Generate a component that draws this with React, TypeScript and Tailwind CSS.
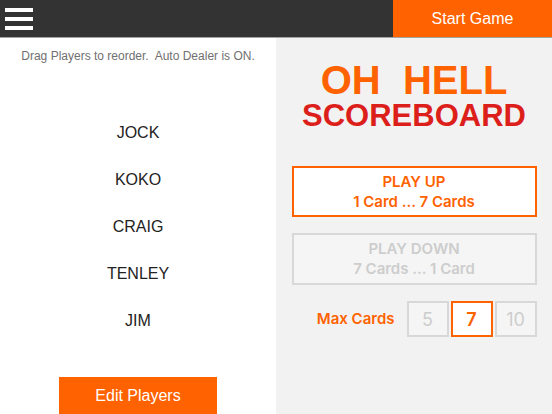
import { useState } from "react"

const players = ["JOCK", "KOKO", "CRAIG", "TENLEY", "JIM"]
const maxOptions = [5, 7, 10]

const HamburgerIcon = () => (
  <div className="flex flex-col gap-[5px] pl-[5px]">
    <span className="block h-[4px] w-[28px] bg-white" />
    <span className="block h-[4px] w-[28px] bg-white" />
    <span className="block h-[4px] w-[28px] bg-white" />
  </div>
)

const ModeButton = ({ title, range, active }: { title: string; range: string; active: boolean }) => (
  <button
    className={
      active
        ? "flex h-[51px] w-[245px] flex-col items-center justify-center border-2 border-[#ff6200] bg-white text-[#ff6200]"
        : "flex h-[52px] w-[245px] flex-col items-center justify-center border-2 border-[#d8d8d8] bg-[#f5f5f5] text-[#cdcdcd]"
    }
  >
    <span className="text-[15px] font-semibold leading-[20px]">{title}</span>
    <span className="text-[15px] font-semibold leading-[20px]">{range}</span>
  </button>
)

export default function App() {
  const [maxCards, setMaxCards] = useState(7)

  return (
    <div className="flex h-[414px] w-[552px] flex-col overflow-hidden font-['Liberation_Sans',Arial,sans-serif]">
      <header className="flex h-[38px] shrink-0 items-stretch border-b border-[#a3a3a3] bg-[#333333]">
        <div className="flex flex-1 items-center">
          <HamburgerIcon />
        </div>
        <button className="flex w-[159px] items-center justify-center bg-[#ff6200] text-[16px] text-white">
          Start Game
        </button>
      </header>

      <div className="flex min-h-0 flex-1">
        <section className="flex w-[276px] flex-col items-center bg-white">
          <p className="mt-[10px] whitespace-pre text-[12px] leading-[16px] text-[#707070]">
            Drag Players to reorder.  Auto Dealer is ON.
          </p>
          <ul className="mt-[45px] flex flex-col items-center">
            {players.map((name) => (
              <li key={name} className="text-[16px] leading-[47px] text-[#222222]">
                {name}
              </li>
            ))}
          </ul>
          <button className="mt-[33px] h-[37px] w-[158px] bg-[#ff6200] text-[16px] text-white">
            Edit Players
          </button>
        </section>

        <section className="flex flex-1 flex-col items-center bg-[#f2f2f2]">
          <h1 className="mt-[22px] whitespace-pre text-[40px] font-bold leading-[40px] text-[#ff6200]">
            OH  HELL
          </h1>
          <h2 className="text-[31px] font-bold leading-[31px] text-[#dc1f1b]">SCOREBOARD</h2>

          <div className="mt-[35px] flex flex-col gap-[16px] font-['Inter',sans-serif]">
            <ModeButton title="PLAY UP" range="1 Card ... 7 Cards" active />
            <ModeButton title="PLAY DOWN" range="7 Cards ... 1 Card" active={false} />
          </div>

          <div className="mt-[16px] flex w-[245px] items-center justify-end font-['Inter',sans-serif]">
            <span className="mr-[12px] text-[15px] font-semibold text-[#ff6200]">Max Cards</span>
            <div className="flex gap-[2px]">
              {maxOptions.map((n) => (
                <button
                  key={n}
                  onClick={() => setMaxCards(n)}
                  className={
                    n === maxCards
                      ? "flex h-[36px] w-[42px] items-center justify-center border-2 border-[#ff6200] bg-white text-[18px] font-semibold text-[#ff6200]"
                      : "flex h-[36px] w-[42px] items-center justify-center border-2 border-[#d8d8d8] bg-[#f5f5f5] text-[18px] text-[#cdcdcd]"
                  }
                >
                  {n}
                </button>
              ))}
            </div>
          </div>
        </section>
      </div>
    </div>
  )
}
